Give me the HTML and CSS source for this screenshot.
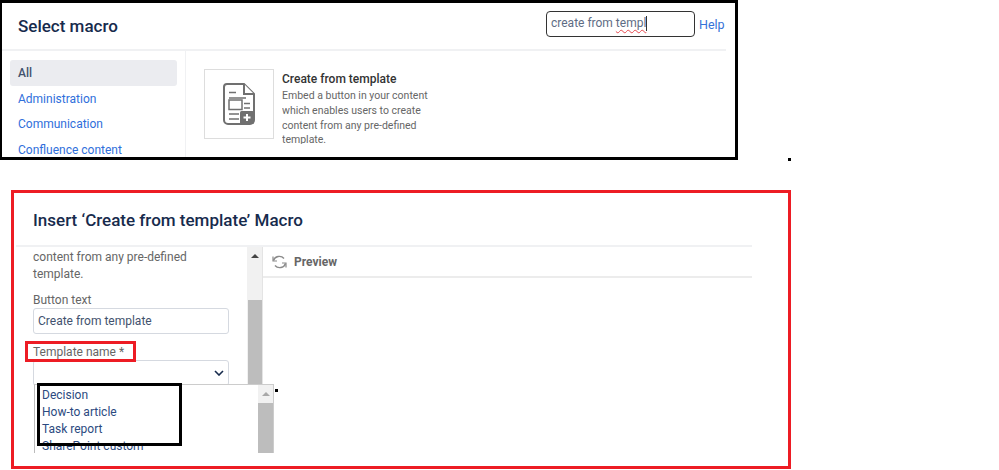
FILE: index.html
```
<!DOCTYPE html>
<html lang="en">
<head>
<meta charset="utf-8">
<title>Create from template macro</title>
<link rel="stylesheet" href="styles.css">
</head>
<body>
<section class="panel-select">
  <header class="select-head">
    <h1 class="select-title">Select macro</h1>
    <div class="search"><span class="search-text">create from <span class="misspelt">templ</span></span><span class="caret"></span></div>
    <a class="help">Help</a>
  </header>
  <div class="select-body">
    <nav class="cats">
      <a class="cat cat-active">All</a>
      <a class="cat">Administration</a>
      <a class="cat">Communication</a>
      <a class="cat">Confluence content</a>
    </nav>
    <div class="results">
      <div class="macro-icon">
        <svg width="34" height="44" viewBox="0 0 34 44" fill="none" stroke="#707070" stroke-width="2">
          <path d="M5 2H22L32 12V38a4 4 0 0 1-4 4H6a4 4 0 0 1-4-4V5a3 3 0 0 1 3-3Z"/>
          <path d="M22 2V12H32" fill="#fff"/>
          <path d="M7 10.500H14M7 16H24M7 32H17M7 37H17M22 21.500H28M22 26H28" stroke-width="1.500"/>
          <rect x="7" y="18" width="13" height="9.500" stroke-width="1.500"/>
          <rect x="18" y="29" width="14" height="13" rx="1.500" fill="#707070" stroke="none"/>
          <path d="M25 32V39M21.500 35.500H28.500" stroke="#fff" stroke-width="2"/>
        </svg>
      </div>
      <div class="macro-text">
        <h2 class="macro-name">Create from template</h2>
        <p class="macro-desc">Embed a button in your content which enables users to create content from any pre-defined template.</p>
      </div>
    </div>
  </div>
</section>
<span class="speck speck-top"></span>
<section class="panel-insert">
  <h1 class="insert-title">Insert ‘Create from template’ Macro</h1>
  <div class="insert-body">
    <div class="form-col">
      <p class="form-desc">content from any pre-defined template.</p>
      <label class="field-label">Button text</label>
      <div class="input">Create from template</div>
      <label class="field-label field-gap">Template name *</label>
      <div class="input input-select">
        <svg width="10" height="6" viewBox="0 0 10 6" fill="none" stroke="#172b4d" stroke-width="1.600"><path d="M1 1L5 5L9 1"/></svg>
      </div>
    </div>
    <div class="form-scroll">
      <span class="arrow-up"></span>
      <span class="form-thumb"></span>
    </div>
    <div class="preview-col">
      <div class="preview-bar">
        <svg width="15" height="14" viewBox="0 0 15 14" fill="none" stroke="#8a8a8a" stroke-width="1.400"><path d="M1.500 5.500A6 5.500 0 0 1 12 3.500M13.500 8.500A6 5.500 0 0 1 3 10.500"/><path d="M1 1.500V6H5M14 12.500V8H10" stroke-width="1.200"/></svg>
        <span>Preview</span>
      </div>
    </div>
  </div>
  <div class="dropdown">
    <ul class="options">
      <li>Decision</li>
      <li>How-to article</li>
      <li>Task report</li>
      <li>SharePoint custom</li>
    </ul>
    <div class="drop-scroll"><span class="arrow-up arrow-grey"></span><span class="drop-thumb"></span></div>
  </div>
  <span class="mark-red"></span>
  <span class="mark-black"></span>
  <span class="speck speck-low"></span>
</section>
</body>
</html>
```
FILE: styles.css
```
* { box-sizing: border-box; }
html, body { margin: 0; height: 470px; overflow: hidden; background: #fff; }
body { font-family: Roboto, "Noto Sans", sans-serif; color: #172b4d; position: relative; }
h1, h2, p, ul { margin: 0; padding: 0; }

.panel-select { width: 738px; height: 160px; border: 3px solid #000; border-left-width: 2px; overflow: hidden; display: flex; flex-direction: column; }
.select-head { height: 48px; margin-right: 9px; display: flex; align-items: center; border-bottom: 2px solid #f0f1f3; padding: 0 2px 0 16px; flex: none; }
.select-title { font-size: 17px; font-weight: 500; flex: 1; line-height: 42px; }
.search { width: 149px; height: 26px; margin-top: -4px; border: 1.500px solid #333; border-radius: 4px; padding-left: 4px; font-size: 12px; line-height: 22px; color: #5e6c84; display: flex; }
.misspelt { text-decoration: underline wavy #e5484d 1px; text-underline-offset: 2px; }
.caret { width: 1px; height: 15px; margin-top: 4px; background: #333; }
.help { margin: -4px 0 0 4px; font-size: 12.500px; color: #3572d8; width: 25px; }

.select-body { display: flex; flex: 1; min-height: 0; }
.cats { width: 181px; flex: none; padding: 9px 8px 0 5px; border-right: 1px solid #f0f1f3; margin-left: 3px; display: flex; flex-direction: column; }
.cat { height: 25.500px; flex: none; padding-left: 8px; font-size: 12px; line-height: 27px; color: #2f6fdb; }
.cat-active { background: #ebecf0; border-radius: 3px; color: #42526e; font-weight: 500; }
.results { display: flex; padding: 18px 0 0 18px; gap: 8px; }
.macro-icon { width: 70px; height: 70px; flex: none; border: 1px solid #ddd; display: flex; align-items: center; justify-content: center; }
.macro-text { width: 160px; height: 75px; overflow: hidden; padding-top: 1px; }
.macro-name { font-size: 12px; font-weight: 500; line-height: 19px; color: #333; }
.macro-desc { font-size: 10.500px; line-height: 14.800px; color: #666; }

.speck { position: absolute; width: 3px; height: 3px; background: #000; }
.speck-top { left: 788px; top: 158px; }

.panel-insert { position: absolute; left: 11px; top: 190px; width: 780px; height: 279px; border: 3px solid #ed1c24; }
.insert-title { font-size: 17px; font-weight: 500; color: #172b4d; line-height: 24px; padding: 15px 0 0 19px; height: 52px; }
.insert-body { display: flex; width: 736px; margin-left: 2px; height: 208px; border-top: 2px solid #f0f1f3; overflow: hidden; }
.form-col { width: 231px; flex: none; padding: 0 18px 0 17px; }
.form-desc { font-size: 12px; line-height: 17px; color: #666; padding-top: 2px; margin-bottom: 9px; }
.field-label { display: block; font-size: 12px; line-height: 17px; color: #666; margin-bottom: -1px; }
.field-gap { margin-top: 10px; }
.input { height: 26px; border: 1px solid #d5d9e0; border-radius: 3px; padding-left: 4px; font-size: 12px; line-height: 24px; color: #42526e; }
.input-select { display: flex; align-items: center; justify-content: flex-end; padding-right: 4px; margin-top: -1px; }
.form-scroll { width: 16px; flex: none; background: #f1f1f1; position: relative; display: flex; flex-direction: column; align-items: center; padding-top: 7px; border-right: 1px solid #e4e4e4; }
.arrow-up { width: 0; height: 0; border: 4px solid transparent; border-top: 0; border-bottom: 4px solid #444; flex: none; }
.arrow-grey { border-bottom-color: #a8a8a8; }
.form-thumb { width: 14px; height: 120px; background: #bdbdbd; margin-top: 42px; flex: none; }
.preview-col { flex: 1; }
.preview-bar { height: 31px; border-bottom: 2px solid #ececec; display: flex; align-items: center; gap: 7px; padding-left: 9px; font-size: 12px; font-weight: 700; color: #666; }

.dropdown { position: absolute; left: 20px; top: 191px; width: 240px; height: 69px; background: #fff; border-left: 1px solid #bbb; border-right: 1px solid #ccc; border-top: 1px solid #ccc; display: flex; overflow: hidden; }
.options { list-style: none; flex: 1; padding: 2px 0 0 7px; font-size: 12px; line-height: 17px; color: #2c4a80; }
.drop-scroll { width: 15px; background: #f1f1f1; display: flex; flex-direction: column; align-items: center; padding-top: 7px; }
.drop-thumb { width: 15px; flex: 1; background: #bdbdbd; margin-top: 7px; }
.mark-red { position: absolute; left: 11px; top: 148px; width: 111px; height: 21px; border: 3px solid #ed1c24; }
.mark-black { position: absolute; left: 23px; top: 190px; width: 145px; height: 63px; border: 3px solid #000; }
.speck-low { left: 261px; top: 196px; }
```
